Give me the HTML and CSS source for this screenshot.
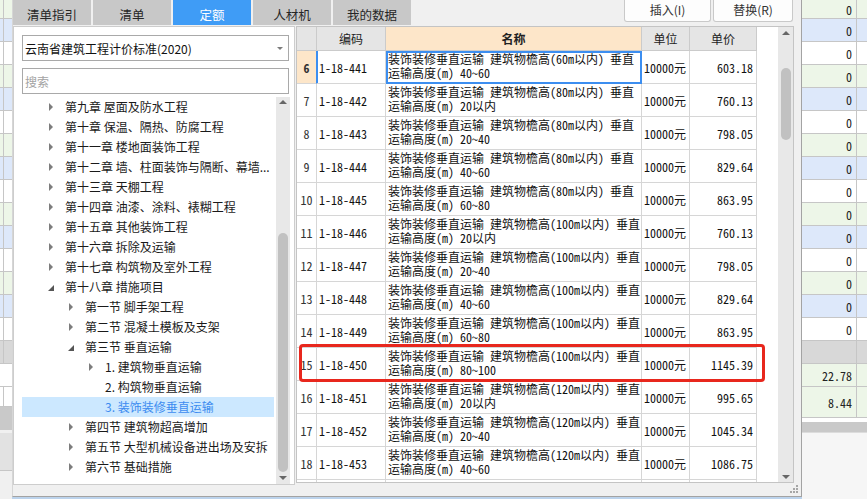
FILE: index.html
```html
<!DOCTYPE html>
<html lang="zh-CN">
<head>
<meta charset="utf-8">
<title>定额</title>
<link rel="stylesheet" href="styles.css">
</head>
<body>
<div class="bg-left">
  <div class="bl-row first g"></div>
  <div class="bl-row b"></div><div class="bl-row w"></div><div class="bl-row g"></div>
  <div class="bl-row b"></div><div class="bl-row w"></div><div class="bl-row g"></div>
  <div class="bl-row b"></div><div class="bl-row w"></div><div class="bl-row g"></div>
  <div class="bl-row b"></div><div class="bl-row w"></div><div class="bl-row g"></div>
  <div class="bl-row b"></div><div class="bl-row w"></div>
  <div class="bl-row gray"></div>
  <div class="bl-row w glyph"><span>携</span></div>
  <div class="bl-row w short"></div>
  <div class="bl-band"></div>
  <div class="bl-row tall glyph lg"><span>改</span></div>
</div>

<div class="dialog">
  <div class="topbar">
    <div class="tabs">
      <div class="tab">清单指引</div>
      <div class="tab">清单</div>
      <div class="tab active">定额</div>
      <div class="tab">人材机</div>
      <div class="tab">我的数据</div>
    </div>
    <div class="actions">
      <button class="btn btn-insert">插入(I)</button>
      <button class="btn btn-replace">替换(R)</button>
    </div>
  </div>

  <div class="main">
    <div class="left-panel">
      <div class="select"><span>云南省建筑工程计价标准(2020)</span><i class="caret"></i></div>
      <div class="search">搜索</div>
      <div class="tree-wrap">
        <div class="tree">
          <div class="node l1"><i class="tri"></i><span>第九章 屋面及防水工程</span></div>
          <div class="node l1"><i class="tri"></i><span>第十章 保温、隔热、防腐工程</span></div>
          <div class="node l1"><i class="tri"></i><span>第十一章 楼地面装饰工程</span></div>
          <div class="node l1"><i class="tri"></i><span>第十二章 墙、柱面装饰与隔断、幕墙...</span></div>
          <div class="node l1"><i class="tri"></i><span>第十三章 天棚工程</span></div>
          <div class="node l1"><i class="tri"></i><span>第十四章 油漆、涂料、裱糊工程</span></div>
          <div class="node l1"><i class="tri"></i><span>第十五章 其他装饰工程</span></div>
          <div class="node l1"><i class="tri"></i><span>第十六章 拆除及运输</span></div>
          <div class="node l1"><i class="tri"></i><span>第十七章 构筑物及室外工程</span></div>
          <div class="node l1"><i class="tri open"></i><span>第十八章 措施项目</span></div>
          <div class="node l2"><i class="tri"></i><span>第一节 脚手架工程</span></div>
          <div class="node l2"><i class="tri"></i><span>第二节 混凝土模板及支架</span></div>
          <div class="node l2"><i class="tri open"></i><span>第三节 垂直运输</span></div>
          <div class="node l3"><i class="tri"></i><span>1. 建筑物垂直运输</span></div>
          <div class="node l3"><i class="tri none"></i><span>2. 构筑物垂直运输</span></div>
          <div class="node l3 selected"><i class="tri none"></i><span>3. 装饰装修垂直运输</span></div>
          <div class="node l2"><i class="tri"></i><span>第四节 建筑物超高增加</span></div>
          <div class="node l2"><i class="tri"></i><span>第五节 大型机械设备进出场及安拆</span></div>
          <div class="node l2"><i class="tri"></i><span>第六节 基础措施</span></div>
        </div>
        <div class="vscroll tree-scroll">
          <i class="sb-up"></i>
          <i class="thumb"></i>
          <i class="sb-space"></i>
          <i class="sb-down"></i>
        </div>
      </div>
    </div>

    <div class="table-area">
      <div class="grid-wrap">
        <div class="row head">
          <div class="num"></div>
          <div class="code-h">编码</div>
          <div class="name-h">名称</div>
          <div class="unit-h">单位</div>
          <div class="price-h">单价</div>
        </div>
        <div class="body">
          <div class="row current">
            <div class="num">6</div><div class="code">1-18-441</div>
            <div class="name">装饰装修垂直运输 建筑物檐高(60m以内) 垂直<br>运输高度(m) 40~60</div>
            <div class="unit">10000元</div><div class="price">603.18</div>
          </div>
          <div class="row">
            <div class="num">7</div><div class="code">1-18-442</div>
            <div class="name">装饰装修垂直运输 建筑物檐高(80m以内) 垂直<br>运输高度(m) 20以内</div>
            <div class="unit">10000元</div><div class="price">760.13</div>
          </div>
          <div class="row">
            <div class="num">8</div><div class="code">1-18-443</div>
            <div class="name">装饰装修垂直运输 建筑物檐高(80m以内) 垂直<br>运输高度(m) 20~40</div>
            <div class="unit">10000元</div><div class="price">798.05</div>
          </div>
          <div class="row">
            <div class="num">9</div><div class="code">1-18-444</div>
            <div class="name">装饰装修垂直运输 建筑物檐高(80m以内) 垂直<br>运输高度(m) 40~60</div>
            <div class="unit">10000元</div><div class="price">829.64</div>
          </div>
          <div class="row">
            <div class="num">10</div><div class="code">1-18-445</div>
            <div class="name">装饰装修垂直运输 建筑物檐高(80m以内) 垂直<br>运输高度(m) 60~80</div>
            <div class="unit">10000元</div><div class="price">863.95</div>
          </div>
          <div class="row">
            <div class="num">11</div><div class="code">1-18-446</div>
            <div class="name">装饰装修垂直运输 建筑物檐高(100m以内) 垂直<br>运输高度(m) 20以内</div>
            <div class="unit">10000元</div><div class="price">760.13</div>
          </div>
          <div class="row">
            <div class="num">12</div><div class="code">1-18-447</div>
            <div class="name">装饰装修垂直运输 建筑物檐高(100m以内) 垂直<br>运输高度(m) 20~40</div>
            <div class="unit">10000元</div><div class="price">798.05</div>
          </div>
          <div class="row">
            <div class="num">13</div><div class="code">1-18-448</div>
            <div class="name">装饰装修垂直运输 建筑物檐高(100m以内) 垂直<br>运输高度(m) 40~60</div>
            <div class="unit">10000元</div><div class="price">829.64</div>
          </div>
          <div class="row">
            <div class="num">14</div><div class="code">1-18-449</div>
            <div class="name">装饰装修垂直运输 建筑物檐高(100m以内) 垂直<br>运输高度(m) 60~80</div>
            <div class="unit">10000元</div><div class="price">863.95</div>
          </div>
          <div class="row">
            <div class="num">15</div><div class="code">1-18-450</div>
            <div class="name">装饰装修垂直运输 建筑物檐高(100m以内) 垂直<br>运输高度(m) 80~100</div>
            <div class="unit">10000元</div><div class="price">1145.39</div>
          </div>
          <div class="row">
            <div class="num">16</div><div class="code">1-18-451</div>
            <div class="name">装饰装修垂直运输 建筑物檐高(120m以内) 垂直<br>运输高度(m) 20以内</div>
            <div class="unit">10000元</div><div class="price">995.65</div>
          </div>
          <div class="row">
            <div class="num">17</div><div class="code">1-18-452</div>
            <div class="name">装饰装修垂直运输 建筑物檐高(120m以内) 垂直<br>运输高度(m) 20~40</div>
            <div class="unit">10000元</div><div class="price">1045.34</div>
          </div>
          <div class="row">
            <div class="num">18</div><div class="code">1-18-453</div>
            <div class="name">装饰装修垂直运输 建筑物檐高(120m以内) 垂直<br>运输高度(m) 40~60</div>
            <div class="unit">10000元</div><div class="price">1086.75</div>
          </div>
          <div class="row">
            <div class="num"></div><div class="code"></div>
            <div class="name"></div>
            <div class="unit"></div><div class="price"></div>
          </div>
        </div>
      </div>
      <div class="filler"></div>
      <div class="vscroll table-scroll">
        <i class="sb-up"></i>
        <i class="thumb"></i>
        <i class="sb-space"></i>
        <i class="sb-down"></i>
      </div>
      <div class="mark"></div>
    </div>
  </div>

  <div class="footer">
    <svg class="grip" width="8" height="8" viewBox="0 0 8 8">
      <rect x="6" y="0" width="2" height="2" fill="#a6a6a6"/>
      <rect x="3" y="3" width="2" height="2" fill="#a6a6a6"/>
      <rect x="6" y="3" width="2" height="2" fill="#a6a6a6"/>
      <rect x="0" y="6" width="2" height="2" fill="#a6a6a6"/>
      <rect x="3" y="6" width="2" height="2" fill="#a6a6a6"/>
      <rect x="6" y="6" width="2" height="2" fill="#a6a6a6"/>
    </svg>
  </div>
</div>

<div class="bg-right">
  <div class="br-row first g"><span class="c1">0</span><span class="c2"></span></div>
  <div class="br-row b"><span class="c1">0</span><span class="c2"></span></div>
  <div class="br-row w"><span class="c1">0</span><span class="c2"></span></div>
  <div class="br-row g"><span class="c1">0</span><span class="c2"></span></div>
  <div class="br-row b"><span class="c1">0</span><span class="c2"></span></div>
  <div class="br-row w"><span class="c1">0</span><span class="c2"></span></div>
  <div class="br-row g"><span class="c1">0</span><span class="c2"></span></div>
  <div class="br-row b"><span class="c1">0</span><span class="c2"></span></div>
  <div class="br-row w"><span class="c1">0</span><span class="c2"></span></div>
  <div class="br-row g"><span class="c1">0</span><span class="c2"></span></div>
  <div class="br-row b"><span class="c1">0</span><span class="c2"></span></div>
  <div class="br-row w"><span class="c1">0</span><span class="c2"></span></div>
  <div class="br-row g"><span class="c1">0</span><span class="c2"></span></div>
  <div class="br-row b"><span class="c1">0</span><span class="c2"></span></div>
  <div class="br-row w"><span class="c1">0</span><span class="c2"></span></div>
  <div class="br-row gray"><span class="c1"></span><span class="c2"></span></div>
  <div class="br-row g"><span class="c1">22.78</span><span class="c2"></span></div>
  <div class="br-row g tall"><span class="c1">8.44</span><span class="c2"></span></div>
  <div class="br-gap"></div>
  <div class="br-hscroll"></div>
</div>
</body>
</html>
```

FILE: styles.css
```css
* { box-sizing: border-box; }
html, body { margin: 0; padding: 0; }
body {
  width: 867px;
  height: 499px;
  overflow: hidden;
  display: flex;
  align-items: flex-start;
  background: #bcd3ec;
  font-family: "Noto Sans CJK SC", "Microsoft YaHei", sans-serif;
  font-size: 12px;
  color: #1e1e1e;
}
i { font-style: normal; }

/* ---------- background app, left strip ---------- */
.bg-left {
  width: 12px;
  height: 499px;
  flex: none;
  overflow: hidden;
  background: #f0f0f0;
}
.bl-row {
  height: 23px;
  display: flex;
  border-bottom: 1px solid #c6c6c6;
}
.bl-row::before {
  content: "";
  width: 3px;
  flex: none;
  border-right: 1px solid #c6c6c6;
}
.bl-row.first { height: 19px; }
.bl-row.short { height: 20px; }
.bl-row.tall { height: 38px; margin-top: 3px; }
.bl-row.glyph span {
  width: 20px;
  flex: none;
  margin-left: -13px;
  font-size: 12px;
  line-height: 20px;
  color: #333;
}
.bl-row.glyph::before { display: none; }
.bl-band { height: 23px; background: #c9c9c9; }
.g { background: #edf6e8; }
.b { background: #dde8fa; }
.w { background: #ffffff; }
.gray { background: #d8d8d8; }
.lg { background: #e2e2e2; }

/* ---------- dialog ---------- */
.dialog {
  width: 790px;
  height: 497px;
  flex: none;
  background: #f0f0f0;
  border-left: 1px solid #d6d6d6;
  border-right: 1px solid #a3a3a3;
  border-bottom: 1px solid #a3a3a3;
  display: flex;
  flex-direction: column;
}
.topbar {
  height: 26px;
  flex: none;
  display: flex;
  justify-content: space-between;
  align-items: flex-start;
  padding-right: 8px;
}
.tabs { display: flex; gap: 2px; }
.tab {
  width: 78px;
  height: 25px;
  background: #c8c8c8;
  color: #262626;
  font-size: 12.5px;
  display: flex;
  align-items: center;
  justify-content: center;
  padding-top: 3px;
}
.tab.active { background: #3f9cf6; color: #fff; }
.actions { display: flex; gap: 2px; }
.btn {
  height: 22px;
  background: #fdfdfd;
  border: 1px solid #c9c9c9;
  border-top: none;
  border-radius: 0 0 3px 3px;
  font-family: inherit;
  font-size: 12px;
  color: #333;
  padding: 0 0 2px;
  margin: 0;
}
.btn-insert { width: 87px; }
.btn-replace { width: 80px; }

.main {
  height: 459px;
  flex: none;
  display: flex;
  align-items: flex-start;
}

/* ---------- left tree panel ---------- */
.left-panel {
  width: 282px;
  height: 459px;
  flex: none;
  background: #fff;
  border: 1px solid #cdcdcd;
  padding: 8px 4px 0 8px;
  display: flex;
  flex-direction: column;
}
.select {
  height: 26px;
  flex: none;
  margin-right: 1px;
  border: 1px solid #a9a9a9;
  display: flex;
  align-items: center;
  justify-content: space-between;
  padding-left: 2px;
  color: #111;
}
.caret {
  width: 0;
  height: 0;
  border-left: 3px solid transparent;
  border-right: 3px solid transparent;
  border-top: 3px solid #7c7c7c;
  margin-right: 5px;
}
.search {
  height: 26px;
  flex: none;
  margin-top: 7px;
  margin-right: 1px;
  border: 1px solid #a9a9a9;
  color: #a3a3a3;
  display: flex;
  align-items: center;
  padding-left: 2px;
}
.tree-wrap {
  flex: 1;
  min-height: 0;
  margin-top: 3px;
  display: flex;
}
.tree {
  flex: 1;
  overflow: hidden;
}
.node {
  height: 20px;
  display: flex;
  align-items: center;
  white-space: nowrap;
  line-height: 20px;
  color: #1a1a1a;
}
.node.l1 { padding-left: 27px; }
.node.l2 { padding-left: 47px; }
.node.l3 { padding-left: 67px; }
.node.selected { background: #cce8ff; color: #3c8cf0; }
.tri {
  width: 16px;
  flex: none;
  display: flex;
  align-items: center;
}
.tri::before {
  content: "";
  width: 0;
  height: 0;
  border-top: 4px solid transparent;
  border-bottom: 4px solid transparent;
  border-left: 4px solid #7d7d7d;
}
.tri.open::before {
  border-top: none;
  border-left: 6px solid transparent;
  border-bottom: 6px solid #555;
  margin-top: 2px;
  margin-left: -1px;
}
.tri.none::before { display: none; }

/* ---------- scrollbars ---------- */
.vscroll {
  flex: none;
  display: flex;
  flex-direction: column;
  align-items: center;
  background: #e8e8e8;
}
.sb-up, .sb-down {
  flex: none;
  height: 10px;
  display: flex;
  align-items: center;
  justify-content: center;
}
.sb-up::before {
  content: "";
  border-left: 4px solid transparent;
  border-right: 4px solid transparent;
  border-bottom: 4px solid #666;
}
.sb-down::before {
  content: "";
  border-left: 4px solid transparent;
  border-right: 4px solid transparent;
  border-top: 4px solid #666;
}
.sb-space { flex: 1; }
.thumb {
  flex: none;
  width: 10px;
  border-radius: 5px;
  background: #c1c1c1;
}
.tree-scroll { width: 14px; margin-left: 2px; }
.tree-scroll .thumb { margin-top: 126px; height: 239px; }
.tree-scroll .sb-down { margin-bottom: 1px; }

/* ---------- quota table ---------- */
.table-area {
  position: relative;
  width: 498px;
  height: 457px;
  flex: none;
  margin-left: 1px;
  background: #fff;
  border: 1px solid #c4c4c4;
  display: flex;
  font-family: "Noto Sans Mono CJK SC", "Noto Sans CJK SC", monospace;
}
.grid-wrap {
  width: 460px;
  flex: none;
  display: flex;
  flex-direction: column;
  overflow: hidden;
}
.filler { width: 21px; flex: none; }
.table-scroll { width: 15px; }
.table-scroll .sb-up { height: 12px; }
.table-scroll .thumb { margin-top: 29px; height: 72px; }

.row {
  display: grid;
  grid-template-columns: 20px 69px 256px 48px 67px;
  height: 33px;
  flex: none;
}
.row > div {
  border-right: 1px solid #d6d6d6;
  border-bottom: 1px solid #d6d6d6;
  overflow: hidden;
  white-space: nowrap;
}
.row.head { height: 24px; }
.row.head > div {
  background: #e5e5e5;
  border-color: #cbcbcb;
  display: flex;
  align-items: center;
  justify-content: center;
  padding-bottom: 1px;
  color: #222;
  font-family: "Noto Sans CJK SC", sans-serif;
}
.row.head > .name-h { background: #fde6c9; font-weight: bold; }
.body { height: 431px; overflow: hidden; }

.num {
  display: flex;
  align-items: center;
  justify-content: center;
  color: #333;
}
.code, .unit {
  display: flex;
  align-items: center;
  padding-left: 2px;
  color: #111;
}
.name {
  padding: 1px 0 0 2px;
  line-height: 14px;
  color: #111;
}
.price {
  display: flex;
  align-items: center;
  justify-content: flex-end;
  padding-right: 3px;
  color: #111;
}
.row.current .num {
  background: #fde6c9;
  font-weight: bold;
  border-right-color: #3c8ef0;
}
.row.current .code { box-shadow: inset 1px 0 0 #3c8ef0; }
.row.current .name {
  border-right-color: #3c8ef0;
  border-bottom-color: #3c8ef0;
  box-shadow: inset 2px 2px 0 #3c8ef0, inset -1px -1px 0 #3c8ef0;
}

.mark {
  position: absolute;
  left: 2px;
  top: 317px;
  width: 466px;
  height: 38px;
  border: 3px solid #e8271d;
  border-radius: 4px;
  pointer-events: none;
}

.footer {
  flex: 1;
  display: flex;
  justify-content: flex-end;
  align-items: flex-end;
  padding: 0 3px 3px 0;
}
.grip { display: block; }

/* ---------- background app, right strip ---------- */
.bg-right {
  width: 65px;
  height: 499px;
  flex: none;
  overflow: hidden;
  background: #f6f6f6;
}
.br-row {
  display: grid;
  grid-template-columns: 55px 10px;
  height: 23px;
}
.br-row.first { height: 19px; }
.br-row.tall { height: 31px; }
.br-row .c1 {
  border-right: 1px solid #c6c6c6;
  border-bottom: 1px solid #c6c6c6;
  text-align: right;
  padding-right: 4px;
  display: flex;
  align-items: center;
  justify-content: flex-end;
  color: #222;
  font-family: "Noto Sans Mono CJK SC", "Noto Sans CJK SC", monospace;
}
.br-row .c2 { border-bottom: 1px solid #c6c6c6; }
.br-gap { height: 4px; background: #fff; }
.br-hscroll { height: 11px; background: #c9c9c9; border-bottom: 1px solid #dcdcdc; }
```
